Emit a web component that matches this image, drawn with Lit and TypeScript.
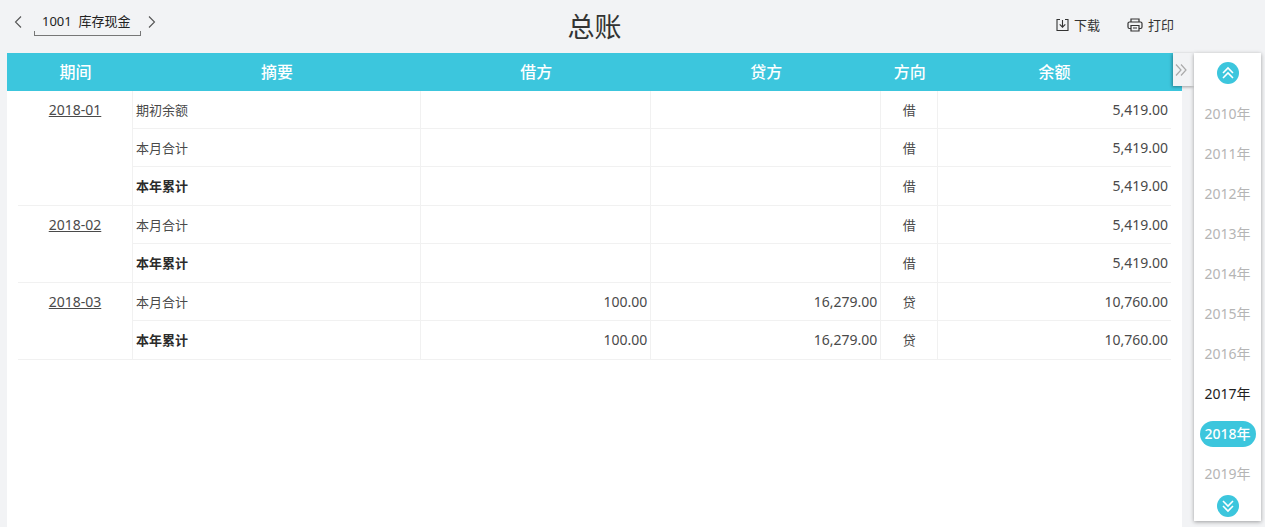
import { LitElement, html, css, svg } from "lit";
import { customElement, property, state } from "lit/decorators.js";

interface Line {
  summary: string;
  debit?: string;
  credit?: string;
  side: string;
  balance: string;
  total?: boolean;
}

interface Period {
  period: string;
  lines: Line[];
}

const PERIODS: Period[] = [
  {
    period: "2018-01",
    lines: [
      { summary: "期初余额", side: "借", balance: "5,419.00" },
      { summary: "本月合计", side: "借", balance: "5,419.00" },
      { summary: "本年累计", side: "借", balance: "5,419.00", total: true },
    ],
  },
  {
    period: "2018-02",
    lines: [
      { summary: "本月合计", side: "借", balance: "5,419.00" },
      { summary: "本年累计", side: "借", balance: "5,419.00", total: true },
    ],
  },
  {
    period: "2018-03",
    lines: [
      { summary: "本月合计", debit: "100.00", credit: "16,279.00", side: "贷", balance: "10,760.00" },
      { summary: "本年累计", debit: "100.00", credit: "16,279.00", side: "贷", balance: "10,760.00", total: true },
    ],
  },
];

const icon = (width: number, height: number, body: unknown) => html`<svg
  width=${width}
  height=${height}
  viewBox="0 0 ${width} ${height}"
  fill="none"
  stroke="currentColor"
  aria-hidden="true"
>${body}</svg>`;

const chevronLeft = icon(8, 14, svg`<path d="M7 1.500 1.500 7 7 12.500" stroke-width="1.100"/>`);
const chevronRight = icon(8, 14, svg`<path d="M1 1.500 6.500 7 1 12.500" stroke-width="1.100"/>`);
const doubleRight = icon(12, 12, svg`<path d="M1 .5 6 6 1 11.500M6 .5 11 6 6 11.500" stroke-width="1.200"/>`);
const doubleUp = icon(14, 14, svg`<path d="M2 7 7 2l5 5M2 12 7 7l5 5" stroke-width="1.600"/>`);
const doubleDown = icon(14, 14, svg`<path d="M2 2l5 5 5-5M2 7l5 5 5-5" stroke-width="1.600"/>`);
const downloadIcon = icon(13, 14, svg`<path d="M4 1.500H1v11h11v-11H9M6.500 2v7M3.700 6.300l2.800 2.800 2.800-2.800" stroke-width="1.100"/>`);
const printIcon = icon(16, 14, svg`<path d="M4 4V1h8v3M4 10.500H2.500A1.500 1.500 0 0 1 1 9V5.500A1.500 1.500 0 0 1 2.500 4h11A1.500 1.500 0 0 1 15 5.500V9a1.500 1.500 0 0 1-1.500 1.500H12M4 7.500h8v5.500H4zM6 10h4" stroke-width="1.200"/>`);

@customElement("ledger-table")
export class LedgerTable extends LitElement {
  @property({ attribute: false }) periods: Period[] = [];

  static styles = css`
    :host {
      display: block;
      background: #fff;
      padding: 0 11px;
      overflow: hidden;
    }
    .ledger {
      width: 100%;
      table-layout: fixed;
      border-collapse: separate;
      border-spacing: 0;
      color: #4a4a4a;
      font-size: 14px;
      line-height: 20px;
    }
    .col-period { width: 115px; }
    .col-summary { width: 25%; }
    .col-amount { width: 230px; }
    .col-side { width: 57px; }
    th {
      height: 38px;
      padding: 0;
      background: #3cc6dd;
      color: #fff;
      font-size: 16px;
      font-weight: 500;
    }
    th:first-child { box-shadow: -11px 0 #3cc6dd; }
    th:last-child { box-shadow: 11px 0 #3cc6dd; }
    td {
      box-sizing: border-box;
      height: 38px;
      padding: 0 3px;
      border-right: 1px solid #f1f1f1;
      border-bottom: 1px solid #f1f1f1;
    }
    tr:last-child td { height: 39px; }
    td:last-child { border-right: 0; }
    .period {
      padding-top: 9px;
      vertical-align: top;
      text-align: center;
    }
    .period a { color: inherit; }
    .summary { font-size: 13px; }
    .amount { text-align: right; }
    .side {
      font-size: 13px;
      text-align: center;
    }
    .total { font-weight: 700; color: #2b2b2b; }
  `;

  render() {
    return html`
      <table class="ledger">
        <colgroup>
          <col class="col-period" />
          <col class="col-summary" />
          <col class="col-amount" />
          <col class="col-amount" />
          <col class="col-side" />
          <col />
        </colgroup>
        <thead>
          <tr>
            ${["期间", "摘要", "借方", "贷方", "方向", "余额"].map((h) => html`<th scope="col">${h}</th>`)}
          </tr>
        </thead>
        ${this.periods.map(
          (p) => html`<tbody>
            ${p.lines.map(
              (line, i) => html`<tr>
                ${i === 0
                  ? html`<td class="period" rowspan=${p.lines.length}><a href="#${p.period}">${p.period}</a></td>`
                  : null}
                <td class="summary ${line.total ? "total" : ""}">${line.summary}</td>
                <td class="amount">${line.debit ?? ""}</td>
                <td class="amount">${line.credit ?? ""}</td>
                <td class="side">${line.side}</td>
                <td class="amount">${line.balance}</td>
              </tr>`
            )}
          </tbody>`
        )}
      </table>
    `;
  }
}

@customElement("year-picker")
export class YearPicker extends LitElement {
  @property({ type: Number }) selected = 2018;
  @state() private first = 2010;

  private readonly available = [2017, 2018];

  static styles = css`
    :host {
      display: flex;
      flex-direction: column;
      align-items: center;
      padding: 9px 0 4px;
      background: #fff;
      box-shadow: 0 1px 4px rgba(0, 0, 0, 0.35);
    }
    button {
      border: 0;
      padding: 0;
      font: inherit;
      cursor: pointer;
    }
    .step {
      display: grid;
      place-items: center;
      width: 22px;
      height: 22px;
      border-radius: 50%;
      background: #3cc6dd;
      color: #fff;
    }
    .years {
      display: flex;
      flex-direction: column;
      gap: 14px;
      margin: 17px 0 8px;
      padding: 0;
      list-style: none;
    }
    .year {
      width: 56px;
      height: 26px;
      border-radius: 13px;
      background: none;
      color: #b5b5b5;
      font-size: 14px;
      line-height: 26px;
    }
    .open { color: #222; }
    .current {
      background: #3cc6dd;
      color: #fff;
      font-weight: 500;
    }
  `;

  render() {
    const years = Array.from({ length: 10 }, (_, i) => this.first + i);
    return html`
      <button class="step" aria-label="向上" @click=${() => (this.first -= 1)}>${doubleUp}</button>
      <ul class="years">
        ${years.map((y) => {
          const tone = y === this.selected ? "current" : this.available.includes(y) ? "open" : "";
          return html`<li>
            <button class="year ${tone}" @click=${() => (this.selected = y)}>${y}年</button>
          </li>`;
        })}
      </ul>
      <button class="step" aria-label="向下" @click=${() => (this.first += 1)}>${doubleDown}</button>
    `;
  }
}

@customElement("app-root")
export class AppRoot extends LitElement {
  @state() private yearsShown = true;

  static styles = css`
    :host {
      display: flex;
      flex-direction: column;
      box-sizing: border-box;
      min-height: 100vh;
      padding: 0 4px 0 7px;
      background: #f2f3f5;
      color: #333;
      font: 14px/20px "Noto Sans", "Noto Sans CJK SC", sans-serif;
    }
    button {
      border: 0;
      padding: 0;
      background: none;
      color: inherit;
      font: inherit;
      cursor: pointer;
    }
    .bar {
      display: grid;
      grid-template-columns: 1fr auto 1fr;
      align-items: center;
      height: 53px;
      padding-right: 79px;
    }
    .account {
      display: flex;
      align-items: center;
      gap: 7px;
      padding: 0 0 10px 7px;
    }
    .arrow {
      display: grid;
      place-items: center;
      width: 8px;
      height: 20px;
      color: #555;
    }
    .subject {
      position: relative;
      margin-left: 5px;
      padding: 5px 10px 7px 8px;
      color: #222;
      font-size: 13px;
      line-height: 16px;
      white-space: pre;
    }
    .subject::after {
      content: "";
      position: absolute;
      inset: auto 0 0;
      height: 4px;
      border: 1px solid #777;
      border-top: 0;
    }
    h1 {
      margin: 0;
      font-size: 27px;
      font-weight: 400;
      line-height: 40px;
    }
    .tools {
      display: flex;
      justify-content: flex-end;
      gap: 27px;
      padding: 0 8px 3px 0;
    }
    .tool {
      display: flex;
      align-items: center;
      gap: 5px;
      font-size: 13px;
      line-height: 18px;
    }
    .content {
      display: flex;
      flex: 1;
      align-items: flex-start;
    }
    .content ledger-table {
      flex: 1;
      align-self: stretch;
    }
    .side {
      position: relative;
      margin-left: 12px;
    }
    .side year-picker {
      position: relative;
      width: 67px;
    }
    .toggle {
      position: absolute;
      top: 0;
      right: 100%;
      display: grid;
      place-items: center;
      width: 21px;
      height: 33px;
      padding-right: 6px;
      background: #f2f3f5;
      color: #aaa;
      box-shadow: -1px 1px 3px rgba(0, 0, 0, 0.35);
    }
  `;

  render() {
    return html`
      <header class="bar">
        <div class="account">
          <button class="arrow" aria-label="上一科目">${chevronLeft}</button>
          <button class="subject">1001  库存现金</button>
          <button class="arrow" aria-label="下一科目">${chevronRight}</button>
        </div>
        <h1>总账</h1>
        <div class="tools">
          <button class="tool">${downloadIcon}下载</button>
          <button class="tool">${printIcon}打印</button>
        </div>
      </header>
      <main class="content">
        <ledger-table .periods=${PERIODS}></ledger-table>
        <aside class="side">
          <button
            class="toggle"
            aria-label="年份"
            aria-expanded=${this.yearsShown}
            @click=${() => (this.yearsShown = !this.yearsShown)}
          >${doubleRight}</button>
          ${this.yearsShown ? html`<year-picker></year-picker>` : null}
        </aside>
      </main>
    `;
  }
}
